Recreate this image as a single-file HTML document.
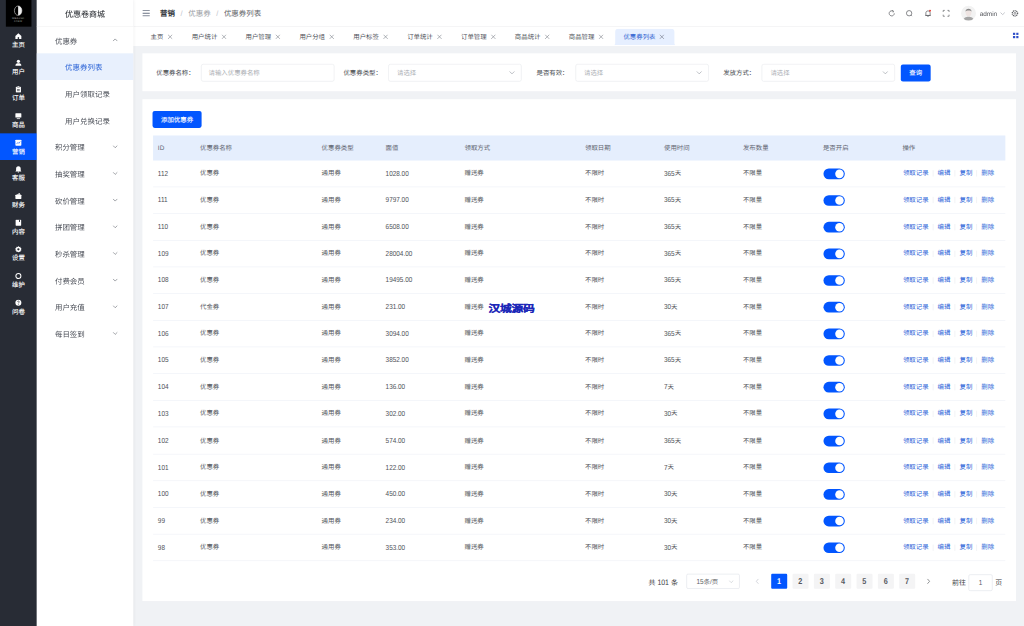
<!DOCTYPE html>
<html lang="zh-CN"><head><meta charset="utf-8">
<style>
html,body{margin:0;padding:0;width:1024px;height:626px;overflow:hidden;}
*{box-sizing:border-box;}
#root{text-rendering:geometricPrecision;-webkit-text-stroke-width:0;position:absolute;left:0;top:0;width:1920px;height:1174px;transform:scale(0.533333);transform-origin:0 0;font-family:"Liberation Sans",sans-serif;color:#303133;overflow:hidden;}
.abs{position:absolute;}
/* dark sidebar */
#nav1{position:absolute;left:0;top:0;width:69px;height:1174px;background:#282c35;}
#logo{position:absolute;left:11px;top:0;width:48px;height:50px;background:#000;}
.n1{position:absolute;left:0;width:69px;height:50px;color:#fff;font-size:12px;text-align:center;-webkit-text-stroke:0.2px #fff;}
.n1 svg{position:absolute;left:28px;top:11px;width:13px;height:13px;}
.n1 span{position:absolute;left:0;right:0;top:26px;line-height:16px;}
.n1.on{background:#0256ff;}
/* secondary sidebar */
#nav2{position:absolute;left:69px;top:0;width:181px;height:1174px;background:#fff;box-shadow:2px 0 6px rgba(0,21,41,0.06);z-index:2;}
#nav2 .title{position:absolute;left:0;right:0;top:0;height:50px;line-height:54px;text-align:center;font-size:15px;font-weight:normal;color:#25282e;border-bottom:1px solid #f0f0f0;-webkit-text-stroke:0.1px #25282e;}
.m{position:absolute;left:0;width:181px;height:50px;line-height:54px;font-size:14px;color:#4a4e57;}
.m .t{position:absolute;left:34px;}
.m.sub .t{left:53px;}
.m.on{background:#e8f0fd;color:#2a62d6;}
.m .ch{position:absolute;left:142px;top:20px;width:10px;height:10px;}
/* header */
#hdr{position:absolute;left:250px;top:0;width:1670px;height:50px;background:#fff;border-bottom:1px solid #f0f0f0;}
#tabs{position:absolute;left:250px;top:50px;width:1670px;height:35px;background:#fff;}
.tab{position:absolute;top:4px;height:31px;line-height:31px;font-size:12px;color:#4a4d55;}
.tab .x{position:absolute;font-size:13px;color:#808695;}
/* cards */
.card{position:absolute;background:#fff;}
.lbl{position:absolute;font-size:12px;color:#44474d;line-height:32px;text-align:right;}
.inp{position:absolute;height:33px;border:1px solid #e4e6eb;border-radius:4px;background:#fff;font-size:12px;color:#a9acb2;line-height:32px;padding-left:13px;}
.inp svg{position:absolute;right:11px;top:11px;width:12px;height:9px;}
.btn{position:absolute;background:#0256ff;color:#fff;font-size:12px;border-radius:4px;text-align:center;-webkit-text-stroke:0.2px #fff;}
/* table */
#tbl{position:absolute;left:285px;top:253.5px;width:1600px;}
.thr{position:absolute;left:1.5px;top:0;width:1598.5px;height:47px;background:#e5eefd;}
.tr{position:absolute;left:1.5px;width:1598.5px;height:50px;border-bottom:1px solid #ebeef5;}
.c{position:absolute;font-size:12px;white-space:nowrap;}
.thr .c{line-height:47px;color:#5f6470;}
.tr .c{line-height:49px;color:#505359;}
.sw{position:absolute;left:1257.5px;top:15px;width:40px;height:20px;border-radius:10px;background:#0256ff;}
.sw:after{content:"";position:absolute;right:2px;top:2px;width:16px;height:16px;border-radius:50%;background:#fff;}
.ops{position:absolute;left:1406.5px;top:0;line-height:49px;font-size:12px;color:#2a62d8;white-space:nowrap;}
.ops i{display:inline-block;width:1px;height:12px;background:#e6e8ec;margin:0 8px;vertical-align:middle;}
.d{font-style:normal;display:inline-block;line-height:12px;transform:scaleY(1.13);}
/* pagination */
.pg{position:absolute;top:1078px;height:28px;line-height:28px;font-size:13px;color:#3c3e43;}
.pb{position:absolute;top:1076px;width:30px;height:28px;line-height:28px;text-align:center;background:#f4f4f5;color:#55585e;font-size:13px;font-weight:bold;border-radius:2px;}
.pb.on{background:#0256ff;color:#fff;}
</style></head><body>
<div style="position:absolute;left:0;top:0;width:1024px;height:626px;background:#f0f2f5"></div>
<div id="root">
<div id="nav1">
<div id="logo"><svg viewBox="0 0 48 50" width="48" height="50"><ellipse cx="23" cy="20" rx="7" ry="8.8" fill="none" stroke="#bbb" stroke-width="1.3"/><path d="M23 11.2 A7 8.8 0 0 1 23 28.8 Z" fill="#eee"/><text x="23" y="35" font-size="5" fill="#aaa" text-anchor="middle" font-family="Liberation Sans" letter-spacing="0.6">MEACHI</text><text x="23" y="42" font-size="4.5" fill="#999" text-anchor="middle" font-family="Liberation Sans" letter-spacing="0.5">CREM</text></svg></div>
<div class="n1" style="top:50px"><svg viewBox="0 0 15 15"><path d="M7.5 1.5 L14 7.5 L14 14 L1 14 L1 7.5 Z" fill="#fff"/><rect x="6" y="10" width="3" height="4" fill="#282c35"/></svg><span>主页</span></div>
<div class="n1" style="top:100px"><svg viewBox="0 0 15 15"><circle cx="7.5" cy="4.5" r="3.5" fill="#fff"/><path d="M1 14 C1 9 4 8.5 7.5 8.5 C11 8.5 14 9 14 14 Z" fill="#fff"/></svg><span>用户</span></div>
<div class="n1" style="top:150px"><svg viewBox="0 0 15 15"><rect x="2" y="2" width="11" height="12.5" rx="1.5" fill="#fff"/><rect x="5" y="0.5" width="5" height="3" rx="1" fill="#fff" stroke="#282c35" stroke-width="0.8"/><rect x="4.5" y="7" width="6" height="1.3" fill="#282c35"/><rect x="4.5" y="10" width="6" height="1.3" fill="#282c35"/></svg><span>订单</span></div>
<div class="n1" style="top:200px"><svg viewBox="0 0 15 15"><rect x="1" y="1.5" width="13" height="9.5" rx="1" fill="#fff"/><rect x="4" y="12.5" width="7" height="1.8" fill="#fff"/></svg><span>商品</span></div>
<div class="n1 on" style="top:250px"><svg viewBox="0 0 15 15"><rect x="1" y="1" width="13" height="13" rx="1.5" fill="#fff"/><path d="M3.5 10.5 L6.5 7 L8.5 9 L11.5 5" stroke="#0256ff" stroke-width="1.3" fill="none"/></svg><span>营销</span></div>
<div class="n1" style="top:300px"><svg viewBox="0 0 15 15"><path d="M7.5 1 C4 1 2.5 3.5 2.5 6.5 L2.5 10 L1 12 L14 12 L12.5 10 L12.5 6.5 C12.5 3.5 11 1 7.5 1 Z" fill="#fff"/><circle cx="7.5" cy="13.5" r="1.5" fill="#fff"/></svg><span>客服</span></div>
<div class="n1" style="top:350px"><svg viewBox="0 0 15 15"><rect x="1" y="5" width="13" height="9" rx="1" fill="#fff"/><path d="M3 5 L10 1 L12 5 Z" fill="#fff"/></svg><span>财务</span></div>
<div class="n1" style="top:400px"><svg viewBox="0 0 15 15"><rect x="1.5" y="1" width="12" height="13" rx="1" fill="#fff"/><rect x="9" y="1" width="2" height="5" fill="#282c35"/></svg><span>内容</span></div>
<div class="n1" style="top:450px"><svg viewBox="0 0 15 15"><path d="M7.5 0.5 L9 2.3 L11.5 1.8 L12 4.3 L14.3 5.5 L13.2 7.5 L14.3 9.5 L12 10.7 L11.5 13.2 L9 12.7 L7.5 14.5 L6 12.7 L3.5 13.2 L3 10.7 L0.7 9.5 L1.8 7.5 L0.7 5.5 L3 4.3 L3.5 1.8 L6 2.3 Z" fill="#fff"/><circle cx="7.5" cy="7.5" r="2.5" fill="#282c35"/></svg><span>设置</span></div>
<div class="n1" style="top:500px"><svg viewBox="0 0 15 15"><circle cx="7.5" cy="7.5" r="5.5" fill="none" stroke="#fff" stroke-width="2.2"/></svg><span>维护</span></div>
<div class="n1" style="top:550px"><svg viewBox="0 0 15 15"><circle cx="7.5" cy="7.5" r="6.5" fill="#fff"/><path d="M5.5 5.8 C5.5 3.5 9.5 3.5 9.5 5.8 C9.5 7.2 7.5 7.2 7.5 9" stroke="#282c35" stroke-width="1.4" fill="none"/><circle cx="7.5" cy="11" r="0.9" fill="#282c35"/></svg><span>问卷</span></div>
</div>
<div id="nav2"><div class="title">优惠卷商城</div>
<div class="m" style="top:50px"><span class="t">优惠券</span><svg class="ch" viewBox="0 0 10 10"><path d="M1 7 L5 3 L9 7" stroke="#6b6f78" stroke-width="1.2" fill="none"/></svg></div>
<div class="m sub on" style="top:100px"><span class="t">优惠券列表</span></div>
<div class="m sub" style="top:150px"><span class="t">用户领取记录</span></div>
<div class="m sub" style="top:200px"><span class="t">用户兑换记录</span></div>
<div class="m" style="top:250px"><span class="t">积分管理</span><svg class="ch" viewBox="0 0 10 10"><path d="M1 3 L5 7 L9 3" stroke="#6b6f78" stroke-width="1.2" fill="none"/></svg></div>
<div class="m" style="top:300px"><span class="t">抽奖管理</span><svg class="ch" viewBox="0 0 10 10"><path d="M1 3 L5 7 L9 3" stroke="#6b6f78" stroke-width="1.2" fill="none"/></svg></div>
<div class="m" style="top:350px"><span class="t">砍价管理</span><svg class="ch" viewBox="0 0 10 10"><path d="M1 3 L5 7 L9 3" stroke="#6b6f78" stroke-width="1.2" fill="none"/></svg></div>
<div class="m" style="top:400px"><span class="t">拼团管理</span><svg class="ch" viewBox="0 0 10 10"><path d="M1 3 L5 7 L9 3" stroke="#6b6f78" stroke-width="1.2" fill="none"/></svg></div>
<div class="m" style="top:450px"><span class="t">秒杀管理</span><svg class="ch" viewBox="0 0 10 10"><path d="M1 3 L5 7 L9 3" stroke="#6b6f78" stroke-width="1.2" fill="none"/></svg></div>
<div class="m" style="top:500px"><span class="t">付费会员</span><svg class="ch" viewBox="0 0 10 10"><path d="M1 3 L5 7 L9 3" stroke="#6b6f78" stroke-width="1.2" fill="none"/></svg></div>
<div class="m" style="top:550px"><span class="t">用户充值</span><svg class="ch" viewBox="0 0 10 10"><path d="M1 3 L5 7 L9 3" stroke="#6b6f78" stroke-width="1.2" fill="none"/></svg></div>
<div class="m" style="top:600px"><span class="t">每日签到</span><svg class="ch" viewBox="0 0 10 10"><path d="M1 3 L5 7 L9 3" stroke="#6b6f78" stroke-width="1.2" fill="none"/></svg></div>
</div>
<div id="hdr">
<svg class="abs" style="left:17px;top:19px" width="14" height="12" viewBox="0 0 14 12"><rect y="0" width="14" height="1.6" fill="#515a6e"/><rect y="5" width="14" height="1.6" fill="#515a6e"/><rect y="10" width="14" height="1.6" fill="#515a6e"/></svg>
<div class="abs" style="left:50px;top:0;line-height:50px;font-size:14px;white-space:nowrap;"><b style="color:#34373d">营销</b><span style="color:#c0c4cc;margin:0 10.5px">/</span><span style="color:#9a9da3">优惠券</span><span style="color:#c0c4cc;margin:0 10.5px">/</span><span style="color:#606266">优惠券列表</span></div>
<svg class="abs" style="left:1414px;top:17px" width="16" height="16" viewBox="0 0 16 16"><path d="M12.8 8 A4.8 4.8 0 1 1 10.6 4" stroke="#606266" stroke-width="1.4" fill="none"/><path d="M8.6 2.6 L11.4 3.6 L10.6 6.4" stroke="#606266" stroke-width="1.3" fill="none"/></svg>
<svg class="abs" style="left:1447px;top:17px" width="16" height="16" viewBox="0 0 16 16"><circle cx="7.6" cy="7.8" r="5" stroke="#606266" stroke-width="1.4" fill="none"/><path d="M11.2 11.4 L13 13.2" stroke="#606266" stroke-width="1.4"/></svg>
<svg class="abs" style="left:1482px;top:17px" width="16" height="16" viewBox="0 0 16 16"><path d="M4 12 L4 7.5 C4 4.8 5.6 3.5 8 3.5 C10.4 3.5 12 4.8 12 7.5 L12 12 Z M2.8 12 L13.2 12" stroke="#606266" stroke-width="1.4" fill="none"/><path d="M6.8 14 L9.2 14" stroke="#606266" stroke-width="1.3"/><circle cx="11.8" cy="3" r="1.9" fill="#e0443a"/></svg>
<svg class="abs" style="left:1516px;top:17px" width="16" height="16" viewBox="0 0 16 16"><path d="M2.5 5.5 L2.5 2.5 L5.5 2.5 M10.5 2.5 L13.5 2.5 L13.5 5.5 M13.5 10.5 L13.5 13.5 L10.5 13.5 M5.5 13.5 L2.5 13.5 L2.5 10.5" stroke="#606266" stroke-width="1.3" fill="none"/></svg>
<div class="abs" style="left:1552px;top:11px;width:28px;height:28px;border-radius:50%;background:#f2f2f2;overflow:hidden;"><svg width="28" height="28" viewBox="0 0 28 28"><path d="M4 28 C5 22 9 20.5 14 20.5 C19 20.5 23 22 24 28Z" fill="#a5a5a5"/><ellipse cx="14" cy="12.5" rx="5.5" ry="6.8" fill="#eee4e2"/><path d="M8.3 11 C7.8 3.5 20.2 3.5 19.7 11 C19 8.2 9 8.2 8.3 11Z" fill="#8a8a8a"/></svg></div>
<div class="abs" style="left:1587px;top:0.6px;line-height:50px;font-size:12px;color:#505258;">admin</div>
<svg class="abs" style="left:1625px;top:22px" width="10" height="7" viewBox="0 0 10 7"><path d="M1 1.5 L5 5.5 L9 1.5" stroke="#9a9ea6" stroke-width="1.1" fill="none"/></svg>
<svg class="abs" style="left:1645px;top:17px" width="16" height="16" viewBox="0 0 16 16"><circle cx="8" cy="8" r="5" stroke="#606266" stroke-width="2.4" fill="none" stroke-dasharray="2 1.2"/><circle cx="8" cy="8" r="1.8" stroke="#606266" stroke-width="1.2" fill="none"/></svg>
</div>
<div id="tabs">
<div class="tab" style="left:32.4px">主页</div>
<svg class="abs" style="left:64.4px;top:14px" width="10" height="10" viewBox="0 0 10 10"><path d="M1 1 L9 9 M9 1 L1 9" stroke="#7a7f88" stroke-width="1.1"/></svg>
<div class="tab" style="left:109.4px">用户统计</div>
<svg class="abs" style="left:165.4px;top:14px" width="10" height="10" viewBox="0 0 10 10"><path d="M1 1 L9 9 M9 1 L1 9" stroke="#7a7f88" stroke-width="1.1"/></svg>
<div class="tab" style="left:210.4px">用户管理</div>
<svg class="abs" style="left:266.4px;top:14px" width="10" height="10" viewBox="0 0 10 10"><path d="M1 1 L9 9 M9 1 L1 9" stroke="#7a7f88" stroke-width="1.1"/></svg>
<div class="tab" style="left:311.4px">用户分组</div>
<svg class="abs" style="left:367.4px;top:14px" width="10" height="10" viewBox="0 0 10 10"><path d="M1 1 L9 9 M9 1 L1 9" stroke="#7a7f88" stroke-width="1.1"/></svg>
<div class="tab" style="left:412.4px">用户标签</div>
<svg class="abs" style="left:468.4px;top:14px" width="10" height="10" viewBox="0 0 10 10"><path d="M1 1 L9 9 M9 1 L1 9" stroke="#7a7f88" stroke-width="1.1"/></svg>
<div class="tab" style="left:513.4px">订单统计</div>
<svg class="abs" style="left:569.4px;top:14px" width="10" height="10" viewBox="0 0 10 10"><path d="M1 1 L9 9 M9 1 L1 9" stroke="#7a7f88" stroke-width="1.1"/></svg>
<div class="tab" style="left:614.4px">订单管理</div>
<svg class="abs" style="left:670.4px;top:14px" width="10" height="10" viewBox="0 0 10 10"><path d="M1 1 L9 9 M9 1 L1 9" stroke="#7a7f88" stroke-width="1.1"/></svg>
<div class="tab" style="left:715.4px">商品统计</div>
<svg class="abs" style="left:771.4px;top:14px" width="10" height="10" viewBox="0 0 10 10"><path d="M1 1 L9 9 M9 1 L1 9" stroke="#7a7f88" stroke-width="1.1"/></svg>
<div class="tab" style="left:816.4px">商品管理</div>
<svg class="abs" style="left:872.4px;top:14px" width="10" height="10" viewBox="0 0 10 10"><path d="M1 1 L9 9 M9 1 L1 9" stroke="#7a7f88" stroke-width="1.1"/></svg>
<svg class="abs" style="left:899px;top:4px" width="120" height="31" viewBox="0 0 120 31"><path d="M0 31 C3.5 31 4.5 29.5 4.5 26 L4.5 6 C4.5 2 6.5 0 10.5 0 L109.5 0 C113.5 0 115.5 2 115.5 6 L115.5 26 C115.5 29.5 116.5 31 120 31 Z" fill="#e6efff"/></svg>
<div class="tab" style="left:919px;color:#2a5cd0">优惠券列表</div>
<svg class="abs" style="left:986px;top:14px" width="10" height="10" viewBox="0 0 10 10"><path d="M1 1 L9 9 M9 1 L1 9" stroke="#6a7080" stroke-width="1.1"/></svg>
<svg class="abs" style="left:1649px;top:11px" width="11" height="11" viewBox="0 0 11 11"><rect x="0" y="0" width="4.5" height="4.5" fill="#2f4fc8"/><rect x="6.5" y="0" width="4.5" height="4.5" fill="#2f4fc8"/><rect x="0" y="6.5" width="4.5" height="4.5" fill="#2f4fc8"/><rect x="6.5" y="6.5" width="4.5" height="4.5" fill="#2f4fc8"/></svg>
</div>
<div class="card" style="left:266.5px;top:100px;width:1638px;height:71px;"></div>
<div class="lbl" style="left:292px;top:120px;width:85px;padding-right:12px;">优惠券名称：</div>
<div class="inp" style="left:377px;top:120px;width:250px;">请输入优惠券名称</div>
<div class="lbl" style="left:643px;top:120px;width:85px;padding-right:12px;">优惠券类型：</div>
<div class="inp" style="left:728px;top:120px;width:250px;padding-left:15.5px;">请选择<svg viewBox="0 0 12 9"><path d="M1.5 2 L6 6.5 L10.5 2" stroke="#a0a4ab" stroke-width="1.3" fill="none"/></svg></div>
<div class="lbl" style="left:993px;top:120px;width:85px;padding-right:12px;">是否有效：</div>
<div class="inp" style="left:1078.5px;top:120px;width:250px;padding-left:15.5px;">请选择<svg viewBox="0 0 12 9"><path d="M1.5 2 L6 6.5 L10.5 2" stroke="#a0a4ab" stroke-width="1.3" fill="none"/></svg></div>
<div class="lbl" style="left:1343px;top:120px;width:85px;padding-right:12px;">发放方式：</div>
<div class="inp" style="left:1428px;top:120px;width:250px;padding-left:15.5px;">请选择<svg viewBox="0 0 12 9"><path d="M1.5 2 L6 6.5 L10.5 2" stroke="#a0a4ab" stroke-width="1.3" fill="none"/></svg></div>
<div class="btn" style="left:1689px;top:121px;width:56px;height:32px;line-height:32px;">查询</div>
<div class="card" style="left:266.5px;top:186px;width:1638px;height:941px;"></div>
<div class="btn" style="left:286px;top:208px;width:92px;height:32px;line-height:32px;">添加优惠券</div>
<div id="tbl">
<div class="thr"><span class="c" style="left:9.5px">ID</span><span class="c" style="left:88.5px">优惠券名称</span><span class="c" style="left:316.5px">优惠券类型</span><span class="c" style="left:436.5px">面值</span><span class="c" style="left:584.5px">领取方式</span><span class="c" style="left:810.5px">领取日期</span><span class="c" style="left:958.5px">使用时间</span><span class="c" style="left:1106.5px">发布数量</span><span class="c" style="left:1256.5px">是否开启</span><span class="c" style="left:1405.5px">操作</span></div>
<div class="tr" style="top:47.0px"><span class="c" style="left:9.5px"><i class="d">112</i></span><span class="c" style="left:88.5px">优惠券</span><span class="c" style="left:316.5px">通用券</span><span class="c" style="left:436.5px"><i class="d">1028.00</i></span><span class="c" style="left:584.5px">赠送券</span><span class="c" style="left:810.5px">不限时</span><span class="c" style="left:958.5px"><i class="d">365</i>天</span><span class="c" style="left:1106.5px">不限量</span><div class="sw"></div><div class="ops">领取记录<i></i>编辑<i></i>复制<i></i>删除</div></div>
<div class="tr" style="top:97.1px"><span class="c" style="left:9.5px"><i class="d">111</i></span><span class="c" style="left:88.5px">优惠券</span><span class="c" style="left:316.5px">通用券</span><span class="c" style="left:436.5px"><i class="d">9797.00</i></span><span class="c" style="left:584.5px">赠送券</span><span class="c" style="left:810.5px">不限时</span><span class="c" style="left:958.5px"><i class="d">365</i>天</span><span class="c" style="left:1106.5px">不限量</span><div class="sw"></div><div class="ops">领取记录<i></i>编辑<i></i>复制<i></i>删除</div></div>
<div class="tr" style="top:147.2px"><span class="c" style="left:9.5px"><i class="d">110</i></span><span class="c" style="left:88.5px">优惠券</span><span class="c" style="left:316.5px">通用券</span><span class="c" style="left:436.5px"><i class="d">6508.00</i></span><span class="c" style="left:584.5px">赠送券</span><span class="c" style="left:810.5px">不限时</span><span class="c" style="left:958.5px"><i class="d">365</i>天</span><span class="c" style="left:1106.5px">不限量</span><div class="sw"></div><div class="ops">领取记录<i></i>编辑<i></i>复制<i></i>删除</div></div>
<div class="tr" style="top:197.3px"><span class="c" style="left:9.5px"><i class="d">109</i></span><span class="c" style="left:88.5px">优惠券</span><span class="c" style="left:316.5px">通用券</span><span class="c" style="left:436.5px"><i class="d">28004.00</i></span><span class="c" style="left:584.5px">赠送券</span><span class="c" style="left:810.5px">不限时</span><span class="c" style="left:958.5px"><i class="d">365</i>天</span><span class="c" style="left:1106.5px">不限量</span><div class="sw"></div><div class="ops">领取记录<i></i>编辑<i></i>复制<i></i>删除</div></div>
<div class="tr" style="top:247.4px"><span class="c" style="left:9.5px"><i class="d">108</i></span><span class="c" style="left:88.5px">优惠券</span><span class="c" style="left:316.5px">通用券</span><span class="c" style="left:436.5px"><i class="d">19495.00</i></span><span class="c" style="left:584.5px">赠送券</span><span class="c" style="left:810.5px">不限时</span><span class="c" style="left:958.5px"><i class="d">365</i>天</span><span class="c" style="left:1106.5px">不限量</span><div class="sw"></div><div class="ops">领取记录<i></i>编辑<i></i>复制<i></i>删除</div></div>
<div class="tr" style="top:297.5px"><span class="c" style="left:9.5px"><i class="d">107</i></span><span class="c" style="left:88.5px">代金券</span><span class="c" style="left:316.5px">通用券</span><span class="c" style="left:436.5px"><i class="d">231.00</i></span><span class="c" style="left:584.5px">赠送券</span><span class="c" style="left:810.5px">不限时</span><span class="c" style="left:958.5px"><i class="d">30</i>天</span><span class="c" style="left:1106.5px">不限量</span><div class="sw"></div><div class="ops">领取记录<i></i>编辑<i></i>复制<i></i>删除</div></div>
<div class="tr" style="top:347.6px"><span class="c" style="left:9.5px"><i class="d">106</i></span><span class="c" style="left:88.5px">优惠券</span><span class="c" style="left:316.5px">通用券</span><span class="c" style="left:436.5px"><i class="d">3094.00</i></span><span class="c" style="left:584.5px">赠送券</span><span class="c" style="left:810.5px">不限时</span><span class="c" style="left:958.5px"><i class="d">365</i>天</span><span class="c" style="left:1106.5px">不限量</span><div class="sw"></div><div class="ops">领取记录<i></i>编辑<i></i>复制<i></i>删除</div></div>
<div class="tr" style="top:397.7px"><span class="c" style="left:9.5px"><i class="d">105</i></span><span class="c" style="left:88.5px">优惠券</span><span class="c" style="left:316.5px">通用券</span><span class="c" style="left:436.5px"><i class="d">3852.00</i></span><span class="c" style="left:584.5px">赠送券</span><span class="c" style="left:810.5px">不限时</span><span class="c" style="left:958.5px"><i class="d">365</i>天</span><span class="c" style="left:1106.5px">不限量</span><div class="sw"></div><div class="ops">领取记录<i></i>编辑<i></i>复制<i></i>删除</div></div>
<div class="tr" style="top:447.8px"><span class="c" style="left:9.5px"><i class="d">104</i></span><span class="c" style="left:88.5px">优惠券</span><span class="c" style="left:316.5px">通用券</span><span class="c" style="left:436.5px"><i class="d">136.00</i></span><span class="c" style="left:584.5px">赠送券</span><span class="c" style="left:810.5px">不限时</span><span class="c" style="left:958.5px"><i class="d">7</i>天</span><span class="c" style="left:1106.5px">不限量</span><div class="sw"></div><div class="ops">领取记录<i></i>编辑<i></i>复制<i></i>删除</div></div>
<div class="tr" style="top:497.9px"><span class="c" style="left:9.5px"><i class="d">103</i></span><span class="c" style="left:88.5px">优惠券</span><span class="c" style="left:316.5px">通用券</span><span class="c" style="left:436.5px"><i class="d">302.00</i></span><span class="c" style="left:584.5px">赠送券</span><span class="c" style="left:810.5px">不限时</span><span class="c" style="left:958.5px"><i class="d">30</i>天</span><span class="c" style="left:1106.5px">不限量</span><div class="sw"></div><div class="ops">领取记录<i></i>编辑<i></i>复制<i></i>删除</div></div>
<div class="tr" style="top:548.0px"><span class="c" style="left:9.5px"><i class="d">102</i></span><span class="c" style="left:88.5px">优惠券</span><span class="c" style="left:316.5px">通用券</span><span class="c" style="left:436.5px"><i class="d">574.00</i></span><span class="c" style="left:584.5px">赠送券</span><span class="c" style="left:810.5px">不限时</span><span class="c" style="left:958.5px"><i class="d">365</i>天</span><span class="c" style="left:1106.5px">不限量</span><div class="sw"></div><div class="ops">领取记录<i></i>编辑<i></i>复制<i></i>删除</div></div>
<div class="tr" style="top:598.1px"><span class="c" style="left:9.5px"><i class="d">101</i></span><span class="c" style="left:88.5px">优惠券</span><span class="c" style="left:316.5px">通用券</span><span class="c" style="left:436.5px"><i class="d">122.00</i></span><span class="c" style="left:584.5px">赠送券</span><span class="c" style="left:810.5px">不限时</span><span class="c" style="left:958.5px"><i class="d">7</i>天</span><span class="c" style="left:1106.5px">不限量</span><div class="sw"></div><div class="ops">领取记录<i></i>编辑<i></i>复制<i></i>删除</div></div>
<div class="tr" style="top:648.2px"><span class="c" style="left:9.5px"><i class="d">100</i></span><span class="c" style="left:88.5px">优惠券</span><span class="c" style="left:316.5px">通用券</span><span class="c" style="left:436.5px"><i class="d">450.00</i></span><span class="c" style="left:584.5px">赠送券</span><span class="c" style="left:810.5px">不限时</span><span class="c" style="left:958.5px"><i class="d">30</i>天</span><span class="c" style="left:1106.5px">不限量</span><div class="sw"></div><div class="ops">领取记录<i></i>编辑<i></i>复制<i></i>删除</div></div>
<div class="tr" style="top:698.3px"><span class="c" style="left:9.5px"><i class="d">99</i></span><span class="c" style="left:88.5px">优惠券</span><span class="c" style="left:316.5px">通用券</span><span class="c" style="left:436.5px"><i class="d">234.00</i></span><span class="c" style="left:584.5px">赠送券</span><span class="c" style="left:810.5px">不限时</span><span class="c" style="left:958.5px"><i class="d">30</i>天</span><span class="c" style="left:1106.5px">不限量</span><div class="sw"></div><div class="ops">领取记录<i></i>编辑<i></i>复制<i></i>删除</div></div>
<div class="tr" style="top:748.4px"><span class="c" style="left:9.5px"><i class="d">98</i></span><span class="c" style="left:88.5px">优惠券</span><span class="c" style="left:316.5px">通用券</span><span class="c" style="left:436.5px"><i class="d">353.00</i></span><span class="c" style="left:584.5px">赠送券</span><span class="c" style="left:810.5px">不限时</span><span class="c" style="left:958.5px"><i class="d">30</i>天</span><span class="c" style="left:1106.5px">不限量</span><div class="sw"></div><div class="ops">领取记录<i></i>编辑<i></i>复制<i></i>删除</div></div>
</div>
<div class="abs" style="left:916px;top:568px;font-size:22px;font-weight:900;color:#1c27b8;line-height:22px;letter-spacing:-0.5px;white-space:nowrap;-webkit-text-stroke:0.6px #1c27b8;transform:scaleY(0.85);transform-origin:0 50%;">汉城源码</div>
<div class="pg" style="left:1216px;">共 <i class="d">101</i> 条</div>
<div class="abs" style="left:1287px;top:1076px;width:100px;height:28px;border:1px solid #dcdfe6;border-radius:3px;background:#fff;font-size:12px;color:#606266;line-height:28px;padding-left:18px;"><i class="d">15</i>条/页<svg class="abs" style="right:10px;top:10px" width="10" height="7" viewBox="0 0 10 7"><path d="M1 1.5 L5 5.5 L9 1.5" stroke="#c0c4cc" stroke-width="1.1" fill="none"/></svg></div>
<svg class="abs" style="left:1416px;top:1084px" width="8" height="12" viewBox="0 0 8 12"><path d="M6 1.5 L2 6 L6 10.5" stroke="#c0c4cc" stroke-width="1.3" fill="none"/></svg>
<div class="pb on" style="left:1446px"><i class="d" style="transform:scale(1.05,1.22)">1</i></div>
<div class="pb" style="left:1486px"><i class="d" style="transform:scale(1.05,1.22)">2</i></div>
<div class="pb" style="left:1526px"><i class="d" style="transform:scale(1.05,1.22)">3</i></div>
<div class="pb" style="left:1566px"><i class="d" style="transform:scale(1.05,1.22)">4</i></div>
<div class="pb" style="left:1606px"><i class="d" style="transform:scale(1.05,1.22)">5</i></div>
<div class="pb" style="left:1646px"><i class="d" style="transform:scale(1.05,1.22)">6</i></div>
<div class="pb" style="left:1686px"><i class="d" style="transform:scale(1.05,1.22)">7</i></div>
<svg class="abs" style="left:1737px;top:1084px" width="8" height="12" viewBox="0 0 8 12"><path d="M2 1.5 L6 6 L2 10.5" stroke="#606266" stroke-width="1.3" fill="none"/></svg>
<div class="pg" style="left:1785px;">前往</div>
<div class="abs" style="left:1816px;top:1077px;width:45px;height:31px;border:1px solid #dcdfe6;border-radius:3px;background:#fff;font-size:12px;color:#606266;line-height:29px;text-align:center;"><i class="d">1</i></div>
<div class="pg" style="left:1866px;">页</div>
</div>
</body></html>
